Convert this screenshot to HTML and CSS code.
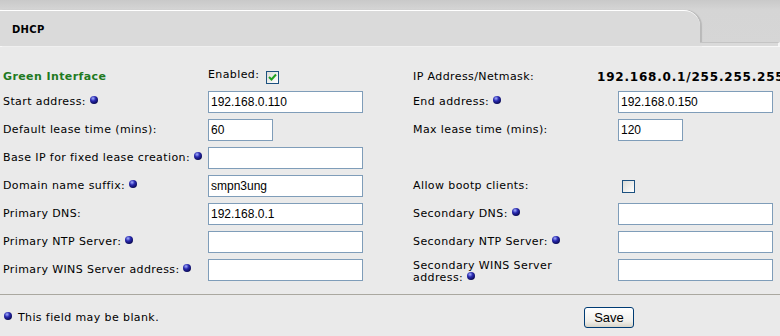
FILE: index.html
```html
<!DOCTYPE html>
<html lang="en">
<head>
    <meta charset="UTF-8">
    <title>DHCP</title>
    <link rel="stylesheet" href="styles.css">
</head>
<body>
    <div class="header">
        <div class="tab">DHCP</div>
        <div class="tab-end"></div>
    </div>

    <div class="form">
        <div class="label title">Green Interface</div>
        <div class="label">Enabled:<span class="check"><svg width="9" height="8" viewBox="0 0 9 8"><path d="M1 4 L3.5 6.5 L8 1.5" fill="none" stroke="#21a121" stroke-width="2"/></svg></span></div>
        <div class="label">IP Address/Netmask:</div>
        <div class="value">192.168.0.1/255.255.255.0</div>

        <div class="label">Start address:&nbsp;<span class="dot"></span></div>
        <div class="cell"><input class="field" type="text" value="192.168.0.110"></div>
        <div class="label">End address:&nbsp;<span class="dot"></span></div>
        <div class="cell"><input class="field" type="text" value="192.168.0.150"></div>

        <div class="label">Default lease time (mins):</div>
        <div class="cell"><input class="field short" type="text" value="60"></div>
        <div class="label">Max lease time (mins):</div>
        <div class="cell"><input class="field short" type="text" value="120"></div>

        <div class="label">Base IP for fixed lease creation:&nbsp;<span class="dot"></span></div>
        <div class="cell"><input class="field" type="text" value=""></div>
        <div class="label"></div>
        <div class="cell"></div>

        <div class="label">Domain name suffix:&nbsp;<span class="dot"></span></div>
        <div class="cell"><input class="field" type="text" value="smpn3ung"></div>
        <div class="label">Allow bootp clients:</div>
        <div class="cell"><span class="check bootp"></span></div>

        <div class="label">Primary DNS:</div>
        <div class="cell"><input class="field" type="text" value="192.168.0.1"></div>
        <div class="label">Secondary DNS:&nbsp;<span class="dot"></span></div>
        <div class="cell"><input class="field" type="text" value=""></div>

        <div class="label">Primary NTP Server:&nbsp;<span class="dot"></span></div>
        <div class="cell"><input class="field" type="text" value=""></div>
        <div class="label">Secondary NTP Server:&nbsp;<span class="dot"></span></div>
        <div class="cell"><input class="field" type="text" value=""></div>

        <div class="label">Primary WINS Server address:&nbsp;<span class="dot"></span></div>
        <div class="cell"><input class="field" type="text" value=""></div>
        <div class="label wrap">Secondary WINS Server address:&nbsp;<span class="dot"></span></div>
        <div class="cell"><input class="field" type="text" value=""></div>
    </div>

    <div class="footer">
        <div class="note"><span class="dot"></span> This field may be blank.</div>
        <button class="save" type="button">Save</button>
    </div>
</body>
</html>
```

FILE: styles.css
```css
body {
    margin: 0;
    padding: 0;
    background-color: #eaeaea;
    color: #000;
    font-family: "DejaVu Sans", Verdana, sans-serif;
    font-size: 11px;
    letter-spacing: 0.4px;
    overflow: hidden; /* long netmask runs off the right edge */
}

/* tab header */
.header {
    display: flex;
    height: 46px;
    background: linear-gradient(#c9c9c9, #d5d5d5 10px, #d6d6d6);
    border-bottom: 1px solid #f7f7f7;
}

.tab {
    flex: 1;
    display: flex;
    align-items: center;
    margin-top: 10px;
    padding: 2px 0 0 12px;
    background-color: #dadada;
    border-top: 1px solid #ffffff;
    border-top-right-radius: 16px;
    box-shadow: 2px 0 1px #b9b9b9;
    font-size: 10px;
    font-weight: bold;
    letter-spacing: 0.3px;
}

.tab-end {
    align-self: flex-end;
    width: 78px;
    height: 3px;
    background-color: #dadada;
    border-top: 1px solid #c4c4c4;
    border-right: 2px solid #f4f4f4;
}

/* form grid */
.form {
    display: grid;
    grid-template-columns: 205px 205px 205px 1fr;
    grid-template-rows: 23px repeat(7, 28px);
    align-items: center;
    padding: 18px 0 10px 3px;
    border-bottom: 1px solid #aaa8a0;
}

.label {
    white-space: nowrap;
    line-height: 12px;
}

.label.wrap {
    white-space: normal;
    padding-right: 40px;
    padding-top: 3px;
}

.title {
    color: #1f7a1f;
    font-weight: bold;
}

.value {
    margin-left: -21px;
    white-space: nowrap;
    font-weight: bold;
    font-size: 12px;
    letter-spacing: 0.8px;
}

.cell {
    display: flex;
    align-items: center;
}

.field {
    box-sizing: border-box;
    width: 155px;
    height: 22px;
    margin: 0;
    padding: 0 2px;
    border: 1px solid #7f9db9;
    background: #fff;
    font-family: "Liberation Sans", Arial, sans-serif;
    font-size: 12px;
    letter-spacing: 0;
    color: #000;
    outline: none;
}

.field.short {
    width: 65px;
}

.dot {
    display: inline-block;
    width: 8px;
    height: 8px;
    border-radius: 50%;
    vertical-align: 1px;
    background: radial-gradient(circle at 38% 30%, #a4b0ff 0, #2a2ab0 35%, #0d0d60 70%, #02021e 100%);
}

.check {
    display: inline-flex;
    align-items: center;
    justify-content: center;
    box-sizing: border-box;
    width: 13px;
    height: 13px;
    margin-left: 7px;
    vertical-align: -3px;
    border: 1px solid #1c5180;
    background: linear-gradient(135deg, #dcdcd7, #ffffff);
}

.check.bootp {
    margin-left: 4px;
}

/* footer */
.footer {
    display: grid;
    grid-template-columns: 580px auto;
    align-items: center;
    padding: 12px 0 0 4px;
}

.note .dot {
    margin-right: 2px;
}

.save {
    width: 50px;
    height: 21px;
    padding: 0;
    border: 1px solid #003c74;
    border-radius: 3px;
    background: linear-gradient(#ffffff, #f0efea 70%, #d8d4c8);
    font-family: "Liberation Sans", Arial, sans-serif;
    font-size: 13px;
    letter-spacing: 0;
    color: #000;
    justify-self: start;
}
```
